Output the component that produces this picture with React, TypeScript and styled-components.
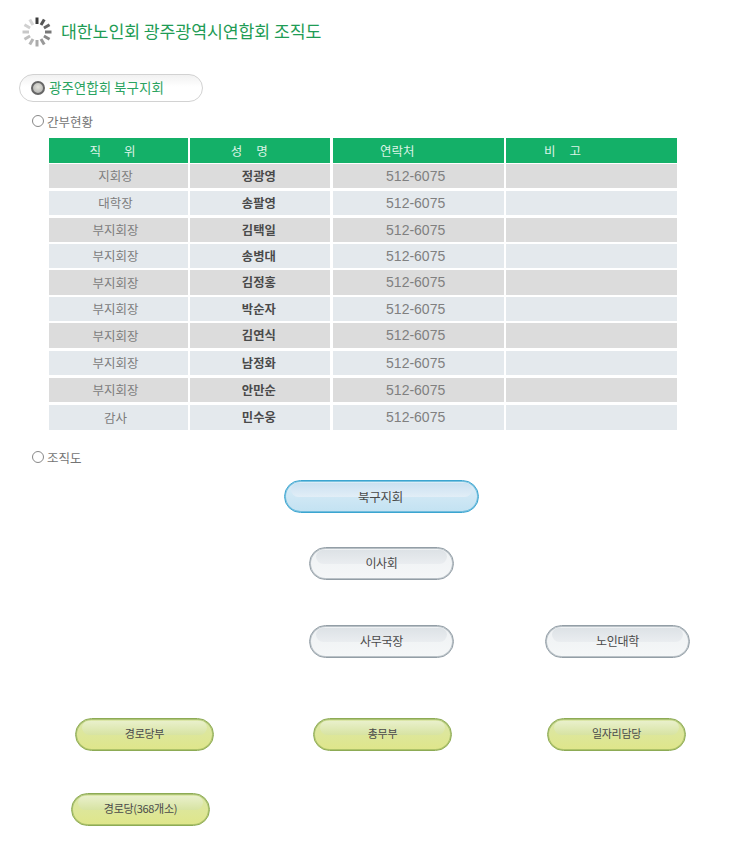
import React from "react";
import styled, { createGlobalStyle } from "styled-components";

const Global = createGlobalStyle`
  html, body { margin: 0; padding: 0; background: #fff; }
  body { font-family: "Noto Sans CJK KR", "Noto Sans", sans-serif; }
`;

const Page = styled.div`
  width: 750px;
  height: 848px;
  overflow: hidden;
  display: flex;
  flex-direction: column;
`;

const TitleBar = styled.header`
  display: flex;
  align-items: center;
  gap: 8px;
  height: 32px;
  margin: 16px 0 0 21px;
`;

const Title = styled.h1`
  margin: -2px 0 0;
  font-size: 17.3px;
  font-weight: 400;
  line-height: 32px;
  color: #1f9c55;
  letter-spacing: -0.1px;
`;

const Pill = styled.div`
  box-sizing: border-box;
  display: flex;
  align-items: center;
  gap: 4px;
  width: 184px;
  height: 28px;
  margin: 26px 0 0 19px;
  padding: 0 0 3px 11px;
  border: 1px solid #d2d2d2;
  border-radius: 14px;
  background: linear-gradient(#f1f1f1, #fff 45%);
  font-size: 13.5px;
  color: #2aa361;
`;

const Bullet = styled.span`
  box-sizing: border-box;
  width: 14px;
  height: 14px;
  margin-top: 3px;
  border-radius: 50%;
  border: 2px solid #666;
  background: radial-gradient(circle at 50% 40%, #e4e4dc, #aaa);
`;

const SectionHead = styled.div<{ $top: number }>`
  display: flex;
  align-items: center;
  gap: 3px;
  height: 18px;
  margin: ${(p) => p.$top}px 0 0 32px;
  font-size: 12.5px;
  color: #747474;
`;

const Ring = styled.span`
  box-sizing: border-box;
  width: 12px;
  height: 12px;
  border-radius: 50%;
  border: 1px solid #888;
`;

const Table = styled.div`
  display: grid;
  grid-template-columns: 139px 140px 171px 171px;
  column-gap: 2.33px;
  width: 628px;
  margin: 8px 0 0 49px;
`;

const HeadCell = styled.div<{ $shift: number; $gap?: number }>`
  box-sizing: border-box;
  height: 25px;
  margin-bottom: 1px;
  padding: 0 ${(p) => p.$shift * 2}px 1px 0;
  display: flex;
  align-items: center;
  justify-content: center;
  gap: ${(p) => p.$gap ?? 0}px;
  background: #14b068;
  color: #dcf3e6;
  font-size: 12.5px;
  white-space: pre;
`;

const Cell = styled.div<{ $alt: boolean; $h: number; $gap: number }>`
  box-sizing: border-box;
  height: ${(p) => p.$h}px;
  margin-bottom: ${(p) => p.$gap}px;
  padding-bottom: 1px;
  display: flex;
  align-items: center;
  justify-content: center;
  background: ${(p) => (p.$alt ? "#e4e9ed" : "#dcdcdc")};
`;

const RoleCell = styled(Cell)`
  padding-right: 6px;
  font-size: 12.5px;
  color: #7c7c7c;
`;

const NameCell = styled(Cell)`
  padding-right: 3px;
  font-size: 12.3px;
  font-weight: 700;
  color: #4a4a4a;
`;

const PhoneCell = styled(Cell)`
  padding-right: 5px;
  font-family: "Liberation Sans", Arial, sans-serif;
  font-size: 14px;
  color: #808080;
`;

const Chart = styled.div`
  position: relative;
  flex: 1;
`;

const palettes = {
  blue: {
    border: "#3ba5d0",
    top: "#dcedf7",
    bottom: "#c3e2f2",
    glossTop: "#cbe1f1",
    glossBottom: "#e2eef7",
    size: 12.5,
    offset: 2,
    lift: 0,
  },
  gray: {
    border: "#939ea6",
    top: "#eef1f3",
    bottom: "#f5f7f8",
    glossTop: "#dde2e6",
    glossBottom: "#eaedf0",
    size: 12,
    offset: 0,
    lift: 2,
  },
  green: {
    border: "#8dab55",
    top: "#dbe7aa",
    bottom: "#dfe68a",
    glossTop: "#e9f0cb",
    glossBottom: "#d7e3a2",
    size: 11,
    offset: 0,
    lift: 3,
  },
};

type Tone = keyof typeof palettes;

const Node = styled.div<{ $tone: Tone; $x: number; $y: number; $w: number }>`
  position: absolute;
  box-sizing: border-box;
  left: ${(p) => p.$x}px;
  top: ${(p) => p.$y}px;
  width: ${(p) => p.$w}px;
  height: 33px;
  padding: 0 ${(p) => palettes[p.$tone].offset}px ${(p) => palettes[p.$tone].lift}px 0;
  border: 1px solid ${(p) => palettes[p.$tone].border};
  border-radius: 17px;
  background: linear-gradient(${(p) => palettes[p.$tone].top}, ${(p) => palettes[p.$tone].bottom});
  box-shadow: inset 0 0 0 1px ${(p) => palettes[p.$tone].border}99;
  display: flex;
  align-items: center;
  justify-content: center;
  font-size: ${(p) => palettes[p.$tone].size}px;
  letter-spacing: -0.3px;
  color: #4a4a4a;
  &::before {
    content: "";
    position: absolute;
    left: 6px;
    right: 6px;
    top: 2px;
    height: 14px;
    border-radius: 8px 8px 9px 9px;
    background: linear-gradient(${(p) => palettes[p.$tone].glossTop}, ${(p) => palettes[p.$tone].glossBottom});
  }
`;

const NodeLabel = styled.span`
  position: relative;
`;

const rows = [
  ["지회장", "정광영", 24, 3],
  ["대학장", "송팔영", 24, 3],
  ["부지회장", "김택일", 24, 2],
  ["부지회장", "송병대", 24, 2],
  ["부지회장", "김정홍", 25, 2],
  ["부지회장", "박순자", 24, 2],
  ["부지회장", "김연식", 25, 3],
  ["부지회장", "남정화", 24, 3],
  ["부지회장", "안만순", 24, 3],
  ["감사", "민수웅", 25, 2],
] as const;

const nodes: { t: string; tone: Tone; x: number; y: number; w: number }[] = [
  { t: "북구지회", tone: "blue", x: 284, y: 14, w: 195 },
  { t: "이사회", tone: "gray", x: 309, y: 81, w: 145 },
  { t: "사무국장", tone: "gray", x: 309, y: 159, w: 145 },
  { t: "노인대학", tone: "gray", x: 545, y: 159, w: 145 },
  { t: "경로당부", tone: "green", x: 75, y: 252, w: 139 },
  { t: "총무부", tone: "green", x: 313, y: 252, w: 139 },
  { t: "일자리담당", tone: "green", x: 547, y: 252, w: 139 },
  { t: "경로당(368개소)", tone: "green", x: 71, y: 327, w: 139 },
];

const spokes = [
  [0, "#3a3a3a"], [30, "#555"], [60, "#666"], [90, "#777"], [120, "#888"], [150, "#999"],
  [180, "#aaa"], [210, "#b5b5b5"], [240, "#c0c0c0"], [270, "#c8c8c8"], [300, "#d0d0d0"], [330, "#d8d8d8"],
] as const;

export default function App() {
  return (
    <Page>
      <Global />
      <TitleBar>
        <svg width="32" height="32" viewBox="-16 -16 32 32" aria-hidden="true">
          {spokes.map(([a, c]) => (
            <line key={a} x1="0" y1="-8" x2="0" y2="-14.5" stroke={c} strokeWidth="3" transform={`rotate(${a})`} />
          ))}
        </svg>
        <Title>대한노인회 광주광역시연합회 조직도</Title>
      </TitleBar>
      <Pill>
        <Bullet />
        광주연합회 북구지회
      </Pill>
      <SectionHead $top={10}>
        <Ring />
        간부현황
      </SectionHead>
      <Table>
        <HeadCell $shift={6} $gap={23}><span>직</span><span>위</span></HeadCell>
        <HeadCell $shift={11} $gap={14}><span>성</span><span>명</span></HeadCell>
        <HeadCell $shift={21}>연락처</HeadCell>
        <HeadCell $shift={29} $gap={14}><span>비</span><span>고</span></HeadCell>
        {rows.map(([role, name, h, gap], i) => (
          <React.Fragment key={name}>
            <RoleCell $alt={i % 2 === 1} $h={h} $gap={gap}>{role}</RoleCell>
            <NameCell $alt={i % 2 === 1} $h={h} $gap={gap}>{name}</NameCell>
            <PhoneCell $alt={i % 2 === 1} $h={h} $gap={gap}>512-6075</PhoneCell>
            <Cell $alt={i % 2 === 1} $h={h} $gap={gap} />
          </React.Fragment>
        ))}
      </Table>
      <SectionHead $top={16}>
        <Ring />
        조직도
      </SectionHead>
      <Chart>
        {nodes.map((n) => (
          <Node key={n.t} $tone={n.tone} $x={n.x} $y={n.y} $w={n.w}>
            <NodeLabel>{n.t}</NodeLabel>
          </Node>
        ))}
      </Chart>
    </Page>
  );
}
